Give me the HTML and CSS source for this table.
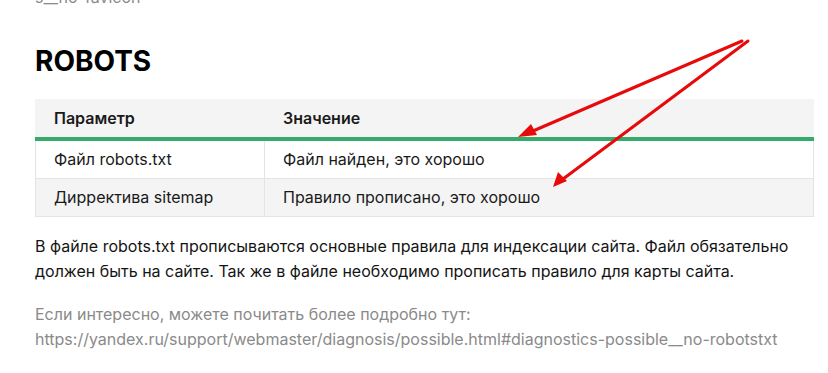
FILE: index.html
```html
<!DOCTYPE html>
<html lang="ru">
<head>
<meta charset="utf-8">
<link rel="stylesheet" href="styles.css">
</head>
<body>
<main class="page">
  <p class="prev-link">s__no-favicon</p>
  <h2 class="title">ROBOTS</h2>
  <table class="params">
    <thead>
      <tr><th class="col-name">Параметр</th><th>Значение</th></tr>
    </thead>
    <tbody>
      <tr><td>Файл robots.txt</td><td>Файл найден, это хорошо</td></tr>
      <tr><td>Дирректива sitemap</td><td>Правило прописано, это хорошо</td></tr>
    </tbody>
  </table>
  <p class="text">В файле robots.txt прописываются основные правила для индексации сайта. Файл обязательно должен быть на сайте. Так же в файле необходимо прописать правило для карты сайта.</p>
  <p class="note">Если интересно, можете почитать более подробно тут:<br>https://yandex.ru/support/webmaster/diagnosis/possible.html#diagnostics-possible__no-robotstxt</p>
</main>
<svg class="arrows" width="828" height="373" viewBox="0 0 828 373">
  <g stroke="#e80a0a" stroke-width="3" stroke-linecap="round" fill="none">
    <line x1="742" y1="41" x2="526" y2="134"/>
    <line x1="748" y1="41" x2="559" y2="182"/>
  </g>
  <g fill="#e80a0a">
    <polygon points="518,137 531,124 537,135"/>
    <polygon points="553,187 558,172 567,181"/>
  </g>
</svg>
</body>
</html>
```
FILE: styles.css
```css
html, body {
  margin: 0;
  padding: 0;
  background: #fff;
}
body {
  font-family: Inter, "Noto Sans", sans-serif;
  color: #1a1a1a;
  overflow: hidden;
  height: 373px;
  position: relative;
}
.page {
  width: 778px;
  padding-left: 35px;
}
.prev-link {
  margin: -15px 0 0;
  font-size: 16px;
  line-height: 25px;
  color: #8a8a8a;
}
.title {
  margin: 34px 0 21px;
  font-size: 28px;
  line-height: 34px;
  font-weight: 700;
  color: #000;
}
.params {
  width: 779px;
  border-collapse: collapse;
  font-size: 16px;
  line-height: 20px;
  margin-top: 0;
}
.params th,
.params td {
  text-align: left;
  padding: 8px 18px 9px;
  border: 1px solid #e4e4e4;
}
.params th {
  font-weight: 600;
  background: #f4f4f4;
  border-top-color: #f4f4f4;
  border-left-color: #f4f4f4;
  border-right-color: #f4f4f4;
  border-bottom: 4px solid #34aa6b;
  color: #1a1a1a;
}
.params .col-name {
  width: 192px;
}
.params tbody tr:nth-child(2) td {
  background: #f4f4f4;
}
.text {
  margin: 17px 0 0;
  font-size: 16px;
  line-height: 25px;
  color: #141414;
}
.note {
  margin: 18px 0 0;
  font-size: 16px;
  line-height: 25px;
  color: #8a8a8a;
}
.arrows {
  position: absolute;
  left: 0;
  top: 0;
  pointer-events: none;
}
```
